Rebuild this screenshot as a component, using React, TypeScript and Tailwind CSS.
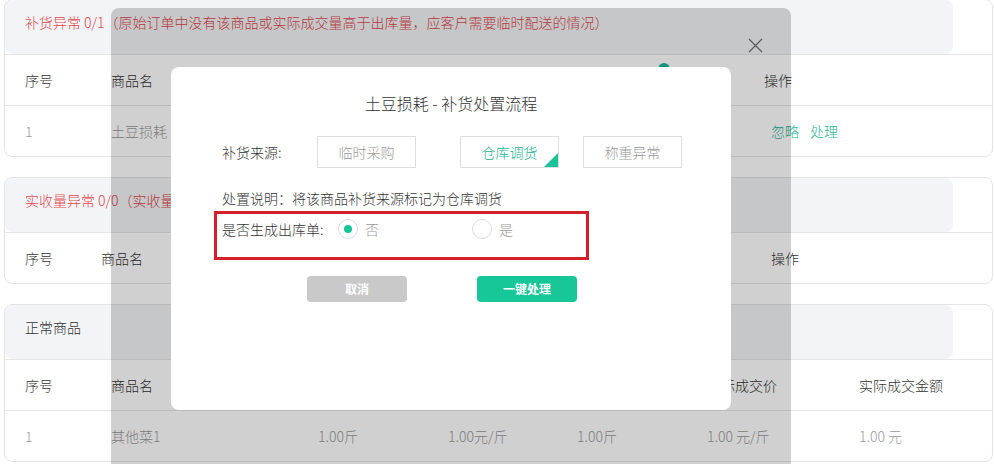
import type { ReactNode } from "react";

const BASE = "font-['Noto_Sans_CJK_SC','Microsoft_YaHei',sans-serif] font-light";

function CardHeader({ children, tone = "text-[#333]" }: { children: ReactNode; tone?: string }) {
  return (
    <div className="h-[54px] w-[948px] rounded-lg bg-[#f3f4f7] pl-[20px] pt-[12px]">
      <div className={`truncate text-[14px] leading-[20px] ${tone}`}>{children}</div>
    </div>
  );
}

function Row({ children }: { children: ReactNode }) {
  return (
    <div className="flex h-[51px] items-center border-t border-[#e6e6e6] pl-[20px] text-[14px] leading-[20px]">
      {children}
    </div>
  );
}

function OptionButton({
  children,
  active,
  className = "",
}: {
  children: ReactNode;
  active?: boolean;
  className?: string;
}) {
  return (
    <div
      className={`relative flex h-[32px] w-[99px] items-center justify-center border border-[#dedede] text-[14px] ${
        active ? "text-[#17b393]" : "text-[#999]"
      } ${className}`}
    >
      {children}
      {active && (
        <span className="absolute bottom-0 right-0 h-0 w-0 border-b-[14px] border-l-[14px] border-b-[#17c397] border-l-transparent" />
      )}
    </div>
  );
}

function Radio({ checked, label }: { checked?: boolean; label: string }) {
  return (
    <div className="flex items-center gap-[7px]">
      <span className="flex h-[20px] w-[20px] items-center justify-center rounded-full border border-[#dcdcdc]">
        {checked && <span className="h-[8px] w-[8px] rounded-full bg-[#17c397]" />}
      </span>
      <span className="text-[14px] text-[#999]">{label}</span>
    </div>
  );
}

export default function App() {
  return (
    <div className={`relative h-[464px] w-[994px] overflow-hidden bg-white ${BASE}`}>
      {/* Page content */}
      <div className="-mt-px pl-[4px]">
        <section className="w-[989px] rounded-lg border border-[#e4e4e4]">
          <CardHeader tone="text-[#e0464b]">
            补货异常 0/1（原始订单中没有该商品或实际成交量高于出库量，应客户需要临时配送的情况）
          </CardHeader>
          <Row>
            <span className="w-[86px] text-[#333]">序号</span>
            <span className="w-[653px] text-[#333]">商品名</span>
            <span className="text-[#333]">操作</span>
          </Row>
          <Row>
            <span className="w-[86px] text-[#999]">1</span>
            <span className="w-[660px] text-[#999]">土豆损耗</span>
            <span className="flex gap-[11px] text-[#1fb596]">
              <span>忽略</span>
              <span>处理</span>
            </span>
          </Row>
        </section>

        <section className="mt-[20px] w-[989px] rounded-lg border border-[#e4e4e4]">
          <CardHeader tone="text-[#e0464b]">实收量异常 0/0（实收量</CardHeader>
          <Row>
            <span className="w-[76px] text-[#333]">序号</span>
            <span className="w-[670px] text-[#333]">商品名</span>
            <span className="text-[#333]">操作</span>
          </Row>
        </section>

        <section className="mt-[20px] w-[989px] rounded-lg border border-[#e4e4e4]">
          <CardHeader>正常商品</CardHeader>
          <Row>
            <span className="w-[86px] text-[#333]">序号</span>
            <span className="w-[207px] text-[#333]">商品名</span>
            <span className="w-[130px] text-[#333]">出库量</span>
            <span className="w-[129px] text-[#333]">出库单价</span>
            <span className="w-[130px] text-[#333]">实际成交量</span>
            <span className="w-[152px] text-[#333]">实际成交价</span>
            <span className="text-[#333]">实际成交金额</span>
          </Row>
          <Row>
            <span className="w-[86px] text-[#999]">1</span>
            <span className="w-[207px] text-[#999]">其他菜1</span>
            <span className="w-[130px] text-[#999]">1.00斤</span>
            <span className="w-[129px] text-[#999]">1.00元/斤</span>
            <span className="w-[130px] text-[#999]">1.00斤</span>
            <span className="w-[152px] text-[#999]">1.00 元/斤</span>
            <span className="text-[#999]">1.00 元</span>
          </Row>
        </section>
      </div>

      {/* stray radio peeking from behind the dialog */}
      <span className="absolute left-[658px] top-[63px] h-[12px] w-[12px] rounded-full bg-[#1fb89a]" />

      {/* Mask */}
      <div className="absolute left-[111px] top-[8px] h-[470px] w-[680px] rounded-t-lg bg-black/[0.185]" />

      {/* Close */}
      <svg
        className="absolute left-[748px] top-[38px]"
        width="15"
        height="15"
        viewBox="0 0 15 15"
        fill="none"
        stroke="#5c5c5c"
        strokeWidth="1.3"
      >
        <path d="M1 1 L14 14 M14 1 L1 14" />
      </svg>

      {/* Dialog */}
      <div className="absolute left-[171px] top-[67px] h-[343px] w-[560px] rounded-lg bg-white">
        <div className="pt-[24px] text-center text-[16px] leading-[24px] text-[#333]">
          土豆损耗 - 补货处置流程
        </div>

        <div className="mt-[21px] flex items-center pl-[51px]">
          <span className="w-[95px] text-[14px] leading-[20px] text-[#333]">补货来源:</span>
          <OptionButton>临时采购</OptionButton>
          <OptionButton active className="ml-[44px]">
            仓库调货
          </OptionButton>
          <OptionButton className="ml-[24px]">称重异常</OptionButton>
        </div>

        <div className="mt-[20px] pl-[51px] text-[14px] leading-[20px] text-[#333]">
          处置说明：将该商品补货来源标记为仓库调货
        </div>

        <div className="ml-[43px] mt-[3px] h-[49px] w-[375px] border-[3px] border-[#d4202a] pl-[5px] pt-[5px]">
          <div className="flex h-[20px] items-center">
            <span className="w-[116px] text-[14px] leading-[20px] text-[#333]">是否生成出库单:</span>
            <div className="w-[134px]">
              <Radio checked label="否" />
            </div>
            <Radio label="是" />
          </div>
        </div>

        <div className="ml-[136px] mt-[16px] flex gap-[70px]">
          <button className="h-[26px] w-[100px] rounded-[4px] bg-[#c9c9c9] text-[12px] font-bold text-white">
            取消
          </button>
          <button className="h-[26px] w-[100px] rounded-[4px] bg-[#17c797] text-[12px] font-bold text-white">
            一键处理
          </button>
        </div>
      </div>
    </div>
  );
}
